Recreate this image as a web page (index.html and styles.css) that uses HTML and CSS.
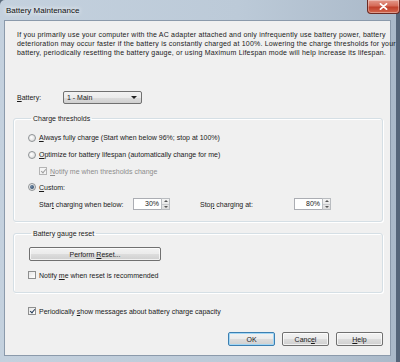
FILE: index.html
```html
<!DOCTYPE html>
<html lang="en">
<head>
    <meta charset="UTF-8">
    <title>Battery Maintenance</title>
    <link rel="stylesheet" href="styles.css">
</head>
<body>
    <div class="window">
        <div class="titlebar">
            <span class="title">Battery Maintenance</span>
            <button class="close-btn" aria-label="Close">
                <svg width="9" height="7" viewBox="0 0 9 7"><path d="M1.5 0.8 L7.5 6.2 M7.5 0.8 L1.5 6.2" stroke="#fff" stroke-width="1.8" stroke-linecap="round"/></svg>
            </button>
        </div>

        <div class="client">
            <p class="intro">If you primarily use your computer with the AC adapter attached and only infrequently use battery power, battery<br>deterioration may occur faster if the battery is constantly charged at 100%. Lowering the charge thresholds for your<br>battery, periodically resetting the battery gauge, or using Maximum Lifespan mode will help increase its lifespan.</p>

            <div class="battery-row">
                <span class="battery-label"><u>B</u>attery:</span>
                <div class="dropdown">
                    <span>1 - Main</span>
                    <span class="arrow"></span>
                </div>
            </div>

            <fieldset class="group group-thresholds">
                <legend>Charge thresholds</legend>
                <div class="option">
                    <span class="radio"></span>
                    <span><u>A</u>lways fully charge (Start when below 96%; stop at 100%)</span>
                </div>
                <div class="option">
                    <span class="radio"></span>
                    <span><u>O</u>ptimize for battery lifespan (automatically change for me)</span>
                </div>
                <div class="option option-sub disabled">
                    <span class="checkbox checked"></span>
                    <span><u>N</u>otify me when thresholds change</span>
                </div>
                <div class="option option-short">
                    <span class="radio checked"></span>
                    <span><u>C</u>ustom:</span>
                </div>
                <div class="threshold-row">
                    <div class="threshold">
                        <span class="threshold-label">Star<u>t</u> charging when below:</span>
                        <div class="spin">
                            <span class="spin-value">30%</span>
                            <span class="spin-buttons"><span class="up"></span><span class="down"></span></span>
                        </div>
                    </div>
                    <div class="threshold">
                        <span class="threshold-label">Sto<u>p</u> charging at:</span>
                        <div class="spin">
                            <span class="spin-value">80%</span>
                            <span class="spin-buttons"><span class="up"></span><span class="down"></span></span>
                        </div>
                    </div>
                </div>
            </fieldset>

            <fieldset class="group group-reset">
                <legend>Battery gauge reset</legend>
                <button class="btn btn-reset">Perform <u>R</u>eset...</button>
                <div class="option option-check">
                    <span class="checkbox"></span>
                    <span>Notify <u>m</u>e when reset is recommended</span>
                </div>
            </fieldset>

            <div class="option option-check periodic">
                <span class="checkbox checked"></span>
                <span>Periodically <u>s</u>how messages about battery charge capacity</span>
            </div>

            <div class="actions">
                <button class="btn btn-default">OK</button>
                <button class="btn">Canc<u>e</u>l</button>
                <button class="btn"><u>H</u>elp</button>
            </div>
        </div>
    </div>
</body>
</html>
```

FILE: styles.css
```css
* {
    margin: 0;
    padding: 0;
    box-sizing: border-box;
}

body {
    font-family: 'Liberation Sans', Arial, sans-serif;
    font-size: 7px;
    line-height: 9px;
    color: #1a1a1a;
    background: #5d6d7d;
}

u {
    text-decoration: underline;
}

.window {
    width: 400px;
    height: 362px;
    display: flex;
    flex-direction: column;
    padding: 0 5px 6px 4px;
    background: linear-gradient(90deg, #c4d1de 0%, #bccad8 60%, #aab9c9 100%);
    border-right: 4px solid #56667a;
    border-radius: 5px 5px 0 0;
}

.titlebar {
    height: 20px;
    display: flex;
    align-items: flex-start;
    justify-content: space-between;
    flex-shrink: 0;
}

.title {
    margin-top: 6px;
    margin-left: 2px;
    font-size: 8px;
    line-height: 9px;
    color: #111;
    text-shadow: 0 0 4px #fff, 0 0 6px #fff;
}

.close-btn {
    width: 33px;
    height: 14px;
    margin-right: -9px;
    display: flex;
    align-items: center;
    justify-content: center;
    border: 1px solid #6b2a23;
    border-top: none;
    border-radius: 0 0 4px 4px;
    background: linear-gradient(#e49a8c 0%, #d56b58 45%, #c0412c 55%, #d3674e 100%);
    box-shadow: inset 0 0 0 1px rgba(255,255,255,0.35);
}

.client {
    flex: 1;
    background: #f0f0f0;
    border: 1px solid #8b9aab;
    padding: 9px 7px 0 8px;
    display: flex;
    flex-direction: column;
}

.intro {
    padding-left: 4px;
    white-space: nowrap;
    letter-spacing: 0.2px;
}

.battery-row {
    display: flex;
    align-items: center;
    height: 13px;
    margin-top: 34px;
    padding-left: 4px;
}

.battery-label {
    width: 46px;
}

.dropdown {
    width: 79px;
    height: 13px;
    display: flex;
    align-items: center;
    justify-content: space-between;
    padding: 0 4px 0 3px;
    border: 1px solid #707070;
    border-radius: 2px;
    background: linear-gradient(#f2f2f2 0%, #ebebeb 50%, #dddddd 51%, #cfcfcf 100%);
}

.arrow {
    width: 0;
    height: 0;
    border-left: 3px solid transparent;
    border-right: 3px solid transparent;
    border-top: 3px solid #222;
}

.group {
    border: 1px solid #d5dfe5;
    border-radius: 3px;
    box-shadow: inset 1px 1px 0 #fff, 1px 1px 0 #fff;
    padding: 6px 8px 8px 14px;
}

.group legend {
    margin-left: 3px;
    padding: 0 2px;
    line-height: 9px;
}

.group-thresholds {
    margin-top: 10px;
}

.group-reset {
    margin-top: 7px;
    padding-top: 9px;
    padding-bottom: 9px;
}

.option {
    height: 17px;
    display: flex;
    align-items: center;
}

.option-sub,
.option-short {
    height: 16px;
}

.option-sub {
    padding-left: 11px;
}

.option-check {
    height: 16px;
    margin-top: 6px;
}

.disabled {
    color: #8d8d8d;
}

.radio {
    width: 8px;
    height: 8px;
    margin-right: 3px;
    border-radius: 50%;
    border: 1px solid #8f9396;
    background: radial-gradient(circle at 40% 40%, #ffffff 0%, #e4e4e4 60%, #c9c9c9 100%);
    display: flex;
    align-items: center;
    justify-content: center;
}

.radio.checked::after {
    content: "";
    width: 4px;
    height: 4px;
    border-radius: 50%;
    background: radial-gradient(circle at 40% 40%, #6f8aa7, #213a57);
}

.checkbox {
    width: 8px;
    height: 8px;
    margin-right: 3px;
    border: 1px solid #8e8f8f;
    background: linear-gradient(135deg, #e6e6e6, #ffffff);
    position: relative;
}

.checkbox.checked::after {
    content: "";
    position: absolute;
    left: 2px;
    top: 0;
    width: 2px;
    height: 4px;
    border-right: 1px solid #273e5a;
    border-bottom: 1px solid #273e5a;
    transform: rotate(40deg);
}

.disabled .checkbox {
    border-color: #b4b4b4;
    background: #f4f4f4;
}

.disabled .checkbox.checked::after {
    border-color: #a0a0a0;
}

.threshold-row {
    height: 18px;
    display: flex;
    align-items: center;
    padding-left: 11px;
}

.threshold {
    display: flex;
    align-items: center;
    width: 161px;
}

.threshold-label {
    width: 94px;
}

.spin {
    display: flex;
    height: 12px;
}

.spin-value {
    width: 28px;
    height: 12px;
    padding-right: 2px;
    text-align: right;
    line-height: 10px;
    background: #fff;
    border: 1px solid #abadb3;
    border-right: none;
}

.spin-buttons {
    width: 9px;
    display: flex;
    flex-direction: column;
    border: 1px solid #b9bcc0;
    background: linear-gradient(#f4f4f4, #dcdcdc);
}

.spin-buttons span {
    flex: 1;
    display: flex;
    align-items: center;
    justify-content: center;
}

.spin-buttons .up {
    border-bottom: 1px solid #c7c9cc;
}

.spin-buttons .up::after,
.spin-buttons .down::after {
    content: "";
    border-left: 2px solid transparent;
    border-right: 2px solid transparent;
}

.spin-buttons .up::after {
    border-bottom: 2px solid #555;
}

.spin-buttons .down::after {
    border-top: 2px solid #555;
}

.btn {
    font-family: inherit;
    font-size: 7px;
    line-height: 9px;
    color: #1a1a1a;
    height: 14px;
    border: 1px solid #707070;
    border-radius: 2px;
    background: linear-gradient(#f2f2f2 0%, #ebebeb 50%, #dddddd 51%, #cfcfcf 100%);
    box-shadow: inset 0 0 0 1px rgba(255,255,255,0.7);
}

.btn-reset {
    width: 132px;
    margin-left: 1px;
}

.periodic {
    margin-top: 10px;
    padding-left: 15px;
}

.actions {
    display: flex;
    justify-content: flex-end;
    gap: 7px;
    margin-top: 13px;
}

.actions .btn {
    width: 47px;
}

.btn-default {
    border-color: #3c7fb1;
    box-shadow: inset 0 0 0 1px #a3d7f5;
}
```
